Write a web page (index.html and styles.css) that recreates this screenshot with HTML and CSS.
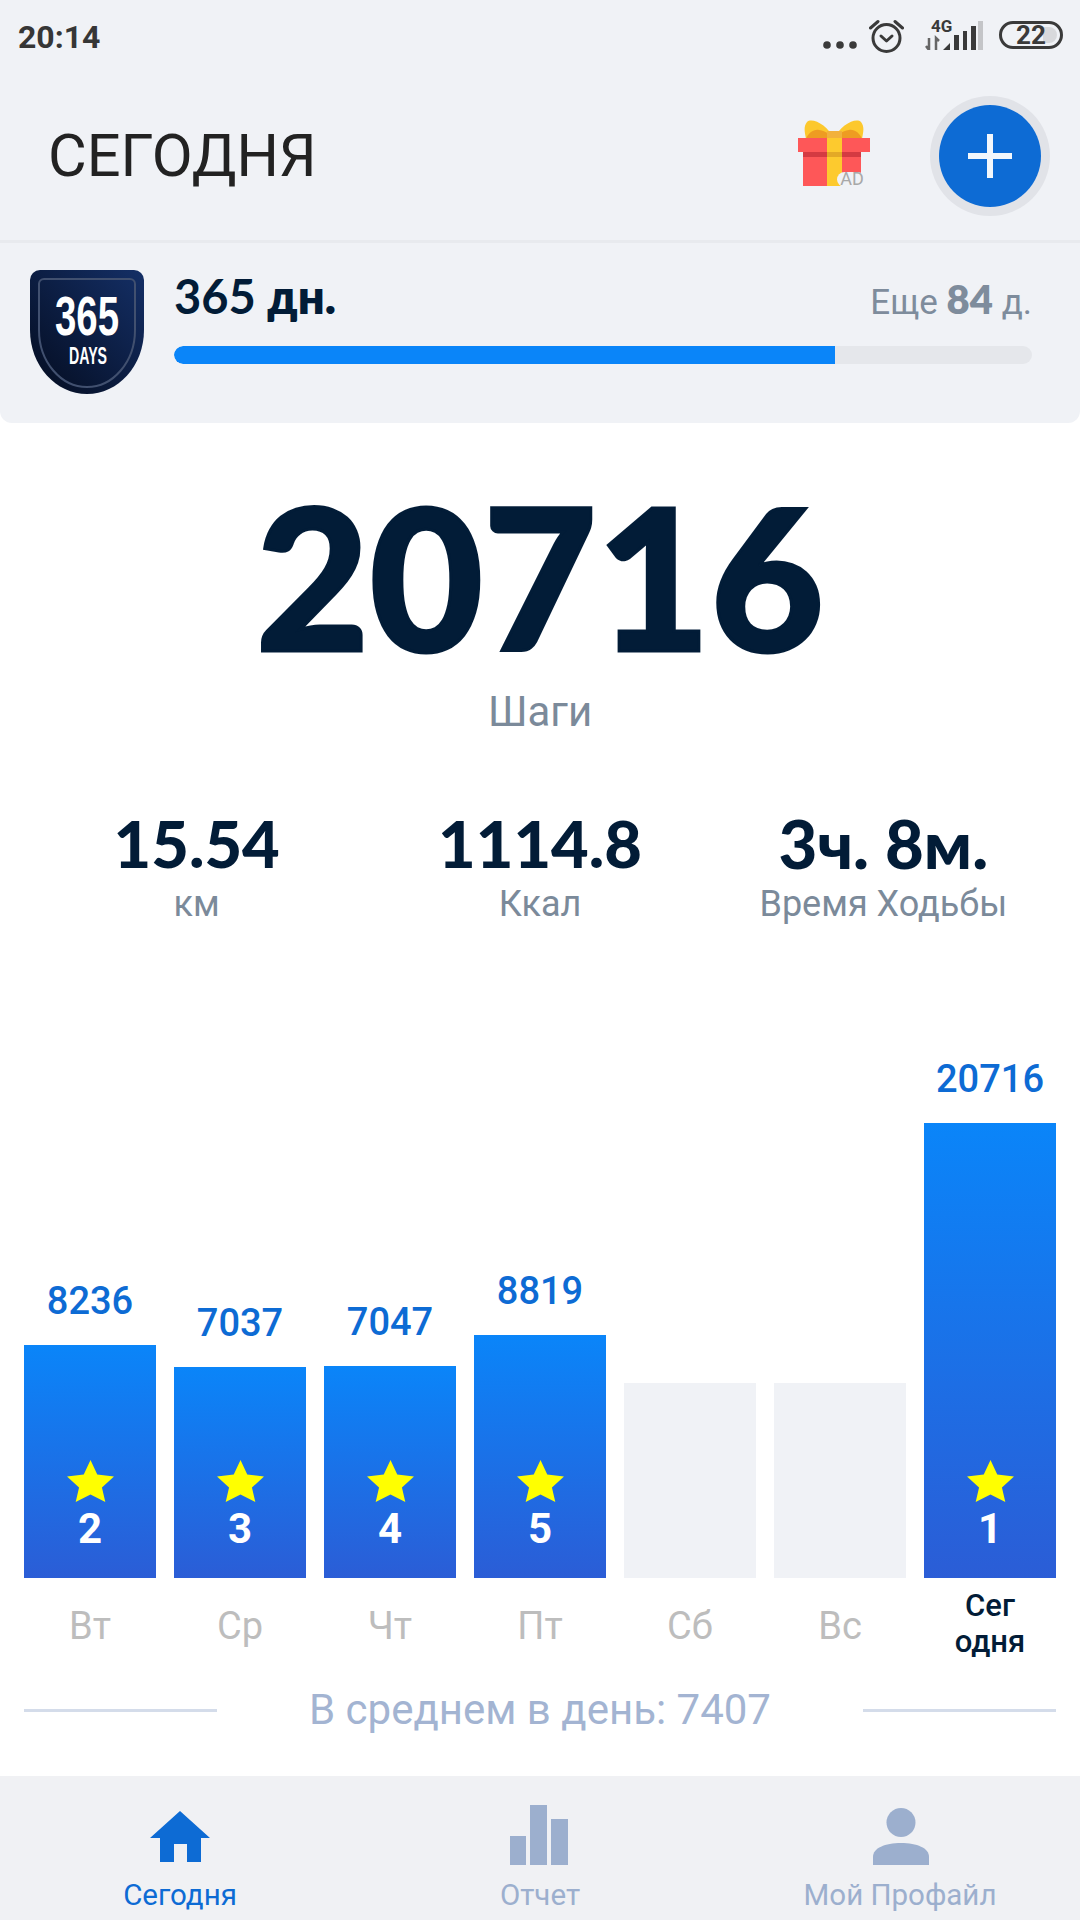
FILE: index.html

```html
<!DOCTYPE html>
<html>
<head>
    <title>Шаги</title>
    <meta charset="UTF-8">
    <meta name="viewport" content="width=device-width, initial-scale=1.0">
    <link rel="stylesheet" href="styles.css">
</head>
<body>
    <div class="phone">
        <div class="status-bar">
            <span class="status-time">20:14</span>
            <div class="status-icons">
                <svg class="icon-dots" width="34" height="8" viewBox="0 0 34 8"><circle cx="4" cy="4" r="3.800"/><circle cx="17" cy="4" r="3.800"/><circle cx="30" cy="4" r="3.800"/></svg>
                <svg class="icon-alarm" width="35" height="34" viewBox="0 0 35 34"><circle cx="17.500" cy="19" r="13.500"/><path d="M12 17l5.500 5 5.500-5"/><path d="M1.500 9L9 2.500M33.500 9L26 2.500"/></svg>
                <div class="signal">
                    <span class="signal-4g">4G</span>
                    <svg width="58" height="29" viewBox="0 0 58 29"><path class="arrows" d="M4 17v12M1 25l3 4M11 29V17l3 3"/><path class="bar-on" d="M18 29l7-7v7zM29 29V14h5v15zM38 29V10h4v19zM46 29V5h5v24z"/><path class="bar-off" d="M53 29V0h5v29z"/></svg>
                </div>
                <div class="battery"><span class="battery-level"></span><span class="battery-num">22</span></div>
            </div>
        </div>

        <div class="header">
            <h1>СЕГОДНЯ</h1>
            <svg class="gift" width="72" height="72" viewBox="0 0 72 72">
                <path d="M36 20C30 6 14-2 9 3 5 8 7 14 8 20h28z" fill="#fcc82d"/>
                <path d="M36 20C42 6 58-2 63 3 67 8 65 14 64 20H36z" fill="#fcc82d"/>
                <path d="M8 20c2-6 8-10 13-9 7 1 12 5 15 9zM64 20c-2-6-8-10-13-9-7 1-12 5-15 9z" fill="#ee9c22"/>
                <rect x="29" y="12" width="15" height="8" fill="#f2b13c"/>
                <rect x="5" y="33" width="58" height="34" fill="#fe5758"/>
                <rect x="5" y="33" width="58" height="5" fill="#d43a42"/>
                <rect y="19" width="72" height="14" fill="#fe5758"/>
                <rect x="29" y="19" width="15" height="48" fill="#fdca2e"/>
                <rect x="29" y="33" width="15" height="5" fill="#e3a926"/>
                <rect x="39" y="53" width="28" height="15" rx="7.500" fill="#f0f2f6"/>
                <text x="54" y="66" text-anchor="middle" class="gift-ad">AD</text>
            </svg>
            <button class="add-btn">
                <svg width="44" height="44" viewBox="0 0 44 44"><path d="M22 0v44M0 22h44"/></svg>
            </button>
        </div>

        <div class="goal-card">
            <svg class="badge" width="114" height="124" viewBox="0 0 114 124">
                <defs>
                    <linearGradient id="badgeFill" x1="1" y1="0" x2="0" y2="1">
                        <stop offset="0" stop-color="#142f66"/>
                        <stop offset="1" stop-color="#040c1f"/>
                    </linearGradient>
                </defs>
                <path d="M10 0h94a10 10 0 0 1 10 10v50c0 36-26 64-57 64S0 96 0 60V10A10 10 0 0 1 10 0z" fill="url(#badgeFill)"/>
                <path d="M14 9h86a5 5 0 0 1 5 5v46c0 32-22 57-48 57S9 92 9 60V14a5 5 0 0 1 5-5z" fill="none" stroke="#41506f" stroke-width="2"/>
                <text x="57" y="65" text-anchor="middle" textLength="64" lengthAdjust="spacingAndGlyphs" class="badge-num">365</text>
                <text x="58" y="94" text-anchor="middle" textLength="38" lengthAdjust="spacingAndGlyphs" class="badge-days">DAYS</text>
            </svg>
            <div class="goal-body">
                <div class="goal-top">
                    <span class="goal-days">365 <b>дн.</b></span>
                    <span class="goal-left">Еще <b>84</b> д.</span>
                </div>
                <div class="progress"><div class="progress-fill" style="width: 77%"></div></div>
            </div>
        </div>

        <div class="main">
            <div class="steps">20716</div>
            <div class="steps-label">Шаги</div>

            <div class="stats">
                <div class="stat"><div class="stat-number">15.54</div><div class="stat-label">км</div></div>
                <div class="stat"><div class="stat-number">1114.8</div><div class="stat-label">Ккал</div></div>
                <div class="stat"><div class="stat-number wide">3ч. 8м.</div><div class="stat-label">Время Ходьбы</div></div>
            </div>

            <div class="chart">
                <div class="day">
                    <div class="day-value">8236</div>
                    <div class="bar" style="height: 233px">
                        <svg class="star" width="47" height="42" viewBox="0 0 46 42" preserveAspectRatio="none"><path d="M23 0l6.6 14.4L46 16.6 34.2 27.500 37.500 42 23 34.600 8.500 42l3.300-14.500L0 16.600l16.400-2.200z"/></svg>
                        <span class="bar-rank">2</span>
                    </div>
                    <div class="day-name">Вт</div>
                </div>
                <div class="day">
                    <div class="day-value">7037</div>
                    <div class="bar" style="height: 211px">
                        <svg class="star" width="47" height="42" viewBox="0 0 46 42" preserveAspectRatio="none"><path d="M23 0l6.6 14.4L46 16.6 34.2 27.500 37.500 42 23 34.600 8.500 42l3.300-14.500L0 16.600l16.400-2.200z"/></svg>
                        <span class="bar-rank">3</span>
                    </div>
                    <div class="day-name">Ср</div>
                </div>
                <div class="day">
                    <div class="day-value">7047</div>
                    <div class="bar" style="height: 212px">
                        <svg class="star" width="47" height="42" viewBox="0 0 46 42" preserveAspectRatio="none"><path d="M23 0l6.6 14.4L46 16.6 34.2 27.500 37.500 42 23 34.600 8.500 42l3.300-14.500L0 16.600l16.400-2.200z"/></svg>
                        <span class="bar-rank">4</span>
                    </div>
                    <div class="day-name">Чт</div>
                </div>
                <div class="day">
                    <div class="day-value">8819</div>
                    <div class="bar" style="height: 243px">
                        <svg class="star" width="47" height="42" viewBox="0 0 46 42" preserveAspectRatio="none"><path d="M23 0l6.6 14.4L46 16.6 34.2 27.500 37.500 42 23 34.600 8.500 42l3.300-14.500L0 16.600l16.400-2.200z"/></svg>
                        <span class="bar-rank">5</span>
                    </div>
                    <div class="day-name">Пт</div>
                </div>
                <div class="day">
                    <div class="bar empty" style="height: 195px"></div>
                    <div class="day-name">Сб</div>
                </div>
                <div class="day">
                    <div class="bar empty" style="height: 195px"></div>
                    <div class="day-name">Вс</div>
                </div>
                <div class="day">
                    <div class="day-value">20716</div>
                    <div class="bar" style="height: 455px">
                        <svg class="star" width="47" height="42" viewBox="0 0 46 42" preserveAspectRatio="none"><path d="M23 0l6.6 14.4L46 16.6 34.2 27.500 37.500 42 23 34.600 8.500 42l3.300-14.500L0 16.600l16.400-2.200z"/></svg>
                        <span class="bar-rank">1</span>
                    </div>
                    <div class="day-name today">Сег<br>одня</div>
                </div>
            </div>

            <div class="average">
                <span class="average-line"></span>
                <span class="average-text">В среднем в день: 7407</span>
                <span class="average-line"></span>
            </div>
        </div>

        <div class="nav">
            <div class="nav-item active">
                <svg width="60" height="60" viewBox="0 0 60 60"><path d="M30 6L60 33H51V57H37V39H24V57H10V33H0z"/></svg>
                <span>Сегодня</span>
            </div>
            <div class="nav-item">
                <svg width="60" height="60" viewBox="0 0 60 60"><path d="M0 31h16v29H0zM20 0h17v60H20zM41 14h17v46H41z"/></svg>
                <span>Отчет</span>
            </div>
            <div class="nav-item">
                <svg width="60" height="60" viewBox="0 0 60 60"><ellipse cx="31" cy="17.500" rx="14.500" ry="14.500"/><path d="M3 60V52C3 43 15 38 31 38s28 5 28 14v8z"/></svg>
                <span>Мой Профайл</span>
            </div>
        </div>
    </div>
</body>
</html>
```

FILE: styles.css

```css
* { box-sizing: border-box; }

body {
    margin: 0;
    font-family: Roboto, "Noto Sans", sans-serif;
    background: #fff;
}
.phone {
    width: 1080px;
    height: 1920px;
    display: flex;
    flex-direction: column;
    overflow: hidden;
}

/* status bar */
.status-bar {
    height: 72px;
    background: #f0f2f6;
    display: flex;
    justify-content: space-between;
    align-items: flex-start;
    padding: 0 17px 0 18px;
}
.status-time { font-size: 32px; font-weight: 700; line-height: 74px; color: #363636; }
.status-icons { display: flex; align-items: flex-end; height: 53px; }
.icon-dots { fill: #3a3a3a; margin: 0 12px 4px 0; }
.icon-alarm { fill: none; stroke: #3a3a3a; stroke-width: 3; stroke-linecap: round; stroke-linejoin: round; margin-right: 21px; }
.signal { position: relative; width: 58px; height: 29px; margin: 0 16px 3px 0; }
.signal-4g { position: absolute; top: -5px; left: 6px; font-size: 17px; line-height: 20px; font-weight: 700; color: #3a3a3a; }
.signal svg { display: block; }
.signal .arrows { fill: none; stroke: #666; stroke-width: 2.500; }
.signal .bar-on { fill: #3a3a3a; }
.signal .bar-off { fill: #c4c5c8; }
.battery {
    position: relative;
    width: 64px;
    height: 28px;
    margin-bottom: 4px;
    border: 3px solid #3a3a3a;
    border-radius: 14px;
    display: flex;
    align-items: center;
    justify-content: center;
}
.battery-level {
    position: absolute;
    top: 3px;
    bottom: 3px;
    right: 3px;
    width: 14px;
    border-radius: 0 9px 9px 0;
    background: #d8d9dc;
}
.battery-num { position: relative; font-size: 26px; font-weight: 700; color: #3a3a3a; }

/* title row */
.header {
    height: 171px;
    background: #f0f2f6;
    border-bottom: 3px solid #e8eaee;
    display: flex;
    align-items: center;
    padding: 0 24px 0 48px;
}
.header h1 {
    margin: 0;
    flex: 1;
    font-size: 59.500px;
    font-weight: 400;
    color: #222;
}
.gift { margin-right: 69px; margin-top: -2px; }
.gift-ad { font-family: Roboto, sans-serif; font-size: 18px; fill: #a8a8a8; }
.add-btn {
    width: 102px;
    height: 102px;
    margin: 0 15px 0 0;
    padding: 0;
    border: none;
    border-radius: 50%;
    background: #0d6bd4;
    box-shadow: 0 0 0 9px #e1e3e8;
    display: flex;
    align-items: center;
    justify-content: center;
}
.add-btn svg { fill: none; stroke: #f2f7fc; stroke-width: 6; }

/* goal card */
.goal-card {
    height: 180px;
    background: #f0f2f6;
    border-radius: 0 0 12px 12px;
    display: flex;
    padding: 27px 48px 0 30px;
}
.badge { flex: none; }
.badge-num { font-family: "Liberation Sans Narrow", "Liberation Sans", sans-serif; font-size: 56px; font-weight: 700; fill: #fff; }
.badge-days { font-family: "Liberation Sans Narrow", "Liberation Sans", sans-serif; font-size: 23px; font-weight: 700; fill: #fff; }
.goal-body { flex: 1; margin-left: 30px; }
.goal-top { display: flex; justify-content: space-between; align-items: baseline; height: 73px; margin-top: -2px; }
.goal-days { font-family: Lato, "Noto Sans", sans-serif; font-size: 47px; font-weight: 700; color: #021c37; line-height: 56px; }
.goal-days b { font-weight: 800; }
.goal-left { font-size: 35px; color: #7e8c9c; }
.goal-left b { font-family: Lato, sans-serif; font-size: 40px; font-weight: 800; }
.progress { height: 18px; margin-top: 5px; border-radius: 9px; background: #e5e7eb; overflow: hidden; }
.progress-fill { height: 100%; background: #0a85f9; border-radius: 9px 0 0 9px; }

/* steps and totals */
.main { flex: 1; background: #fff; }
.steps {
    font-family: Lato, sans-serif;
    font-size: 196px;
    font-weight: 900;
    -webkit-text-stroke: 3px #021c37;
    line-height: 236px;
    margin-top: 35px;
    text-align: center;
    color: #021c37;
}
.steps-label { font-size: 42px; line-height: 46px; text-align: center; color: #7b8a9a; margin-top: -5px; }
.stats {
    display: grid;
    grid-template-columns: repeat(3, 1fr);
    padding: 0 25px;
    margin-top: 67px;
    text-align: center;
}
.stat-number { font-family: Lato, "Noto Sans", sans-serif; font-size: 65px; font-weight: 900; line-height: 82px; color: #021c37; }
.stat-number.wide { font-size: 67px; }
.stat-label { font-size: 36px; line-height: 42px; color: #7b8a9a; margin-top: -1px; }

/* week chart */
.chart {
    height: 733px;
    display: flex;
    align-items: flex-end;
    justify-content: space-between;
    padding: 0 24px;
}
.day { width: 132px; display: flex; flex-direction: column; align-items: center; }
.day-value { font-size: 38px; font-weight: 500; color: #0d6bd4; line-height: 44px; margin-bottom: 22px; }
.bar {
    width: 100%;
    background: linear-gradient(#0a85f9, #2b5dd6);
    display: flex;
    flex-direction: column;
    align-items: center;
    justify-content: flex-end;
    padding-bottom: 31px;
}
.bar.empty { background: #f0f2f6; }
.star { fill: #ffff00; }
.bar-rank { font-size: 42px; font-weight: 700; line-height: 36px; color: #fff; margin-top: 9px; }
.day-name {
    height: 80px;
    padding-top: 27px;
    font-size: 38px;
    line-height: 42px;
    color: #bdbdbd;
}
.day-name.today {
    padding-top: 10px;
    font-size: 31px;
    font-weight: 500;
    line-height: 36px;
    text-align: center;
    color: #021c37;
}

.average {
    display: flex;
    align-items: center;
    justify-content: space-between;
    padding: 0 24px;
    margin-top: 29px;
}
.average-line { width: 193px; height: 3px; background: #d4dcea; }
.average-text { font-size: 42px; line-height: 46px; color: #a3b4d2; }

/* bottom tabs */
.nav {
    height: 144px;
    background: #f0f1f4;
    display: grid;
    grid-template-columns: repeat(3, 1fr);
}
.nav-item {
    display: flex;
    flex-direction: column;
    align-items: center;
    padding-top: 29px;
    font-size: 29.500px;
    line-height: 36px;
    color: #9cafce;
}
.nav-item svg { fill: #9cafce; margin-bottom: 12px; }
.nav-item.active { color: #0d6bd4; }
.nav-item.active svg { fill: #0d6bd4; }
```
